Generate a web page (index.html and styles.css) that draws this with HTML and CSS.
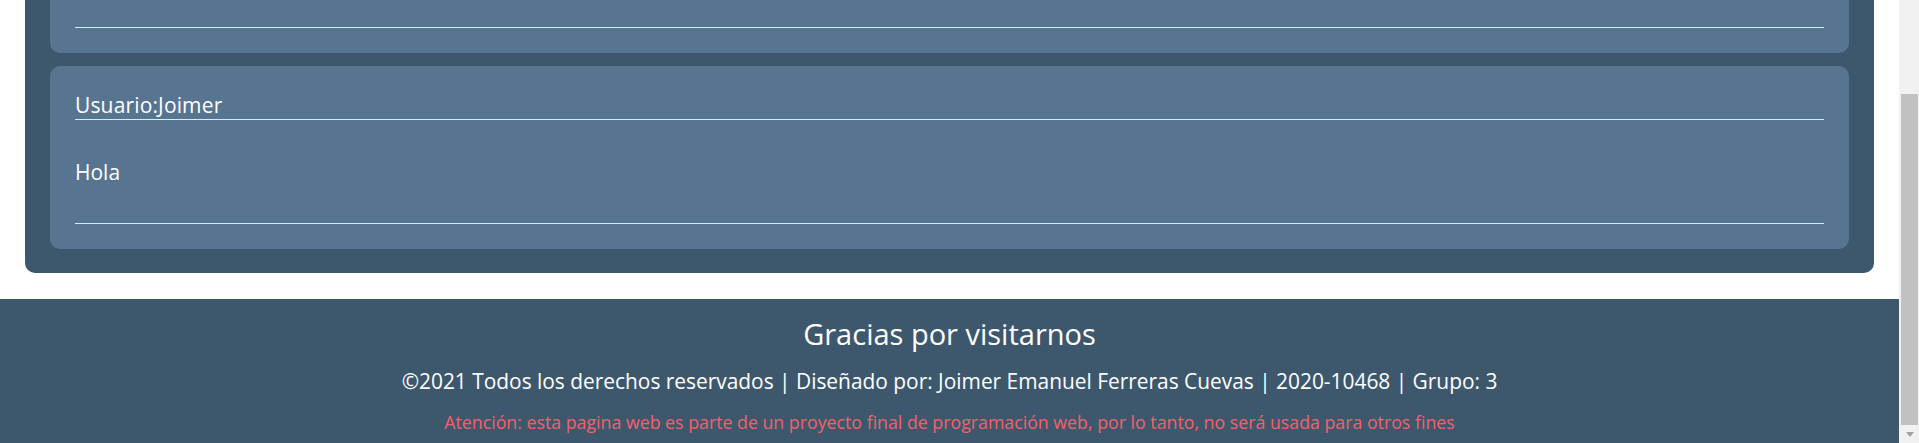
FILE: index.html
```html
<!DOCTYPE html>
<html lang="es">
<head>
<meta charset="utf-8">
<title>Comentarios</title>
<link rel="stylesheet" href="styles.css">
</head>
<body>
<div class="window">
  <div class="viewport">
    <div class="page">
      <main class="comments">
        <article class="comment">
          <div class="comment-msg comment-msg--clipped"></div>
        </article>
        <article class="comment">
          <div class="comment-user">Usuario:Joimer</div>
          <div class="comment-msg">Hola</div>
        </article>
      </main>
      <footer class="footer">
        <h2 class="footer-title">Gracias por visitarnos</h2>
        <p class="footer-credits">©2021 Todos los derechos reservados | Diseñado por: Joimer Emanuel Ferreras Cuevas | 2020-10468 | Grupo: 3</p>
        <p class="footer-note">Atención: esta pagina web es parte de un proyecto final de programación web, por lo tanto, no será usada para otros fines</p>
      </footer>
    </div>
  </div>
  <div class="scrollbar" aria-hidden="true">
    <div class="scrollbar-thumb"></div>
    <div class="scrollbar-button"><span class="scrollbar-arrow"></span></div>
  </div>
</div>
</body>
</html>
```
FILE: styles.css
```css
html, body {
  margin: 0;
  padding: 0;
  height: 100%;
  overflow: hidden;
  background: #ffffff;
}

body {
  font-family: "Open Sans", "Noto Sans", "DejaVu Sans", sans-serif;
  color: #ffffff;
}

.window {
  display: flex;
  height: 100vh;
}

.viewport {
  flex: 1;
  min-width: 0;
  overflow: hidden;
  display: flex;
  flex-direction: column-reverse;
}

.page {
  display: flex;
  flex-direction: column;
  flex-shrink: 0;
}

/* comments */
.comments {
  margin: 25px 25px 26px;
  padding: 25px 25px 24px;
  background: #3d586d;
  border-radius: 10px;
  display: flex;
  flex-direction: column;
  gap: 13px;
}

.comment {
  background: #577590;
  border-radius: 10px;
  padding: 25px;
  font-size: 21px;
}

.comment-user {
  line-height: 28px;
  letter-spacing: 0.15px;
  border-bottom: 1px solid #caf0f8;
}

.comment-msg {
  line-height: 28px;
  padding: 38px 0 37px;
  border-bottom: 1px solid #caf0f8;
}

.comment-msg--clipped {
  min-height: 28px;
}

/* footer */
.footer {
  background: #3d586d;
  padding: 15px 0 9px;
  text-align: center;
}

.footer-title {
  margin: 0;
  font-size: 29px;
  font-weight: 400;
  line-height: 40px;
}

.footer-credits {
  margin: 13px 0 0;
  font-size: 20.9px;
  line-height: 29px;
}

.footer-note {
  margin: 14px 0 0;
  font-size: 17.75px;
  line-height: 24px;
  color: #f45f6b;
}

/* scrollbar (window chrome) */
.scrollbar {
  width: 20px;
  flex-shrink: 0;
  background: #f1f1f1;
  display: flex;
  flex-direction: column;
  padding-top: 94px;
  box-sizing: border-box;
}

.scrollbar-thumb {
  height: 331px;
  margin: 0 1px 0 2px;
  background: #c1c1c1;
}

.scrollbar-button {
  flex: 1;
  display: flex;
  justify-content: center;
  padding: 7px 0 0 2px;
}

.scrollbar-arrow {
  width: 0;
  height: 0;
  border-top: 5px solid #a3a3a3;
  border-left: 4.5px solid transparent;
  border-right: 4.5px solid transparent;
}
```
